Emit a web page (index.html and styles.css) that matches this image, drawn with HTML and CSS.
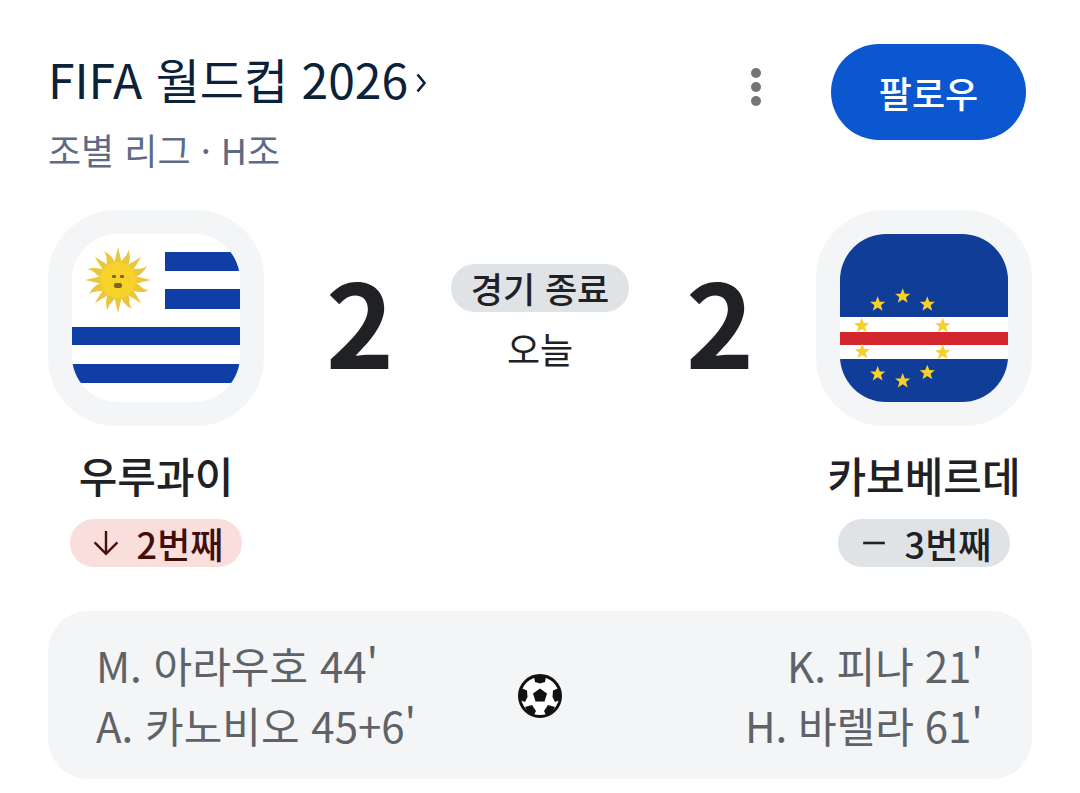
FILE: index.html
```html
<!DOCTYPE html>
<html lang="ko">
<head>
    <meta charset="UTF-8">
    <meta name="viewport" content="width=device-width, initial-scale=1.0">
    <title>FIFA 월드컵 2026</title>
    <link rel="stylesheet" href="styles.css">
</head>
<body>
    <div class="header">
        <div class="league">
            <h2 class="league-title">FIFA 월드컵 2026<svg class="chevron" viewBox="0 0 10 20"><path d="M1.5 1.5l7 8.5-7 8.5" fill="none" stroke="#0b2239" stroke-width="2.6"/></svg></h2>
            <p class="league-round">조별 리그 · H조</p>
        </div>
        <div class="header-actions">
            <svg class="more" viewBox="0 0 10 38"><circle cx="5" cy="5" r="5"/><circle cx="5" cy="19" r="5"/><circle cx="5" cy="33" r="5"/></svg>
            <button class="follow">팔로우</button>
        </div>
    </div>

    <div class="match">
        <div class="team">
            <div class="tile">
                <svg class="flag" viewBox="0 0 168 168">
                    <rect width="168" height="168" fill="#fff"/>
                    <g fill="#0f3fa6">
                        <rect x="93" y="18" width="75" height="19"/>
                        <rect x="93" y="55" width="75" height="20"/>
                        <rect y="93" width="168" height="18"/>
                        <rect y="130" width="168" height="19"/>
                    </g>
                    <g fill="#ecc63a" transform="translate(46 46)">
                        <path id="ray" d="M-4 -16L0 -33L4 -16Z"/>
                        <use href="#ray" transform="rotate(45)"/>
                        <use href="#ray" transform="rotate(90)"/>
                        <use href="#ray" transform="rotate(135)"/>
                        <use href="#ray" transform="rotate(180)"/>
                        <use href="#ray" transform="rotate(225)"/>
                        <use href="#ray" transform="rotate(270)"/>
                        <use href="#ray" transform="rotate(315)"/>
                        <g transform="rotate(22.5)">
                            <path id="wavy" d="M-4 -15C-5 -22 0 -25 -2 -32C3 -27 4 -21 4 -15Z"/>
                            <use href="#wavy" transform="rotate(45)"/>
                            <use href="#wavy" transform="rotate(90)"/>
                            <use href="#wavy" transform="rotate(135)"/>
                            <use href="#wavy" transform="rotate(180)"/>
                            <use href="#wavy" transform="rotate(225)"/>
                            <use href="#wavy" transform="rotate(270)"/>
                            <use href="#wavy" transform="rotate(315)"/>
                        </g>
                        <circle r="18" fill="#f6d22a"/>
                        <g fill="#7d6420">
                            <rect x="-6" y="-5" width="4" height="3" rx="1"/>
                            <rect x="2" y="-5" width="4" height="3" rx="1"/>
                            <rect x="-4" y="3" width="8" height="5" rx="2"/>
                        </g>
                    </g>
                </svg>
            </div>
            <div class="team-name">우루과이</div>
            <div class="rank rank-down">
                <svg class="rank-icon" viewBox="0 0 24 24"><path d="M12 1v21M1.5 11.5L12 22l10.5-10.5" fill="none" stroke="#410e0b" stroke-width="2.2"/></svg>
                <span>2번째</span>
            </div>
        </div>

        <div class="scoreboard">
            <div class="score">2</div>
            <div class="status">
                <div class="status-pill">경기 종료</div>
                <div class="status-date">오늘</div>
            </div>
            <div class="score">2</div>
        </div>

        <div class="team">
            <div class="tile">
                <svg class="flag" viewBox="0 0 168 168">
                    <defs>
                        <polygon id="star" points="0,-8 2.1,-2.6 7.6,-2.5 3.3,1 4.9,6.5 0,3.3 -4.9,6.5 -3.3,1 -7.6,-2.5 -2.1,-2.6"/>
                    </defs>
                    <rect width="168" height="168" fill="#0f3d97"/>
                    <rect y="83" width="168" height="42" fill="#fff"/>
                    <rect y="98" width="168" height="13" fill="#d4262f"/>
                    <g fill="#f7d02c">
                        <use href="#star" x="37.7" y="70.3"/>
                        <use href="#star" x="62.7" y="62.3"/>
                        <use href="#star" x="87.3" y="70.3"/>
                        <use href="#star" x="21.7" y="91.7"/>
                        <use href="#star" x="102.7" y="91.7"/>
                        <use href="#star" x="22.3" y="117.7"/>
                        <use href="#star" x="102.7" y="118.7"/>
                        <use href="#star" x="37.7" y="140"/>
                        <use href="#star" x="62.7" y="147"/>
                        <use href="#star" x="87.3" y="138.7"/>
                    </g>
                </svg>
            </div>
            <div class="team-name">카보베르데</div>
            <div class="rank rank-same">
                <svg class="rank-icon" viewBox="0 0 24 24"><path d="M2 12h20" fill="none" stroke="#202124" stroke-width="2.4"/></svg>
                <span>3번째</span>
            </div>
        </div>
    </div>

    <div class="goals">
        <div class="scorers">
            <div>M. 아라우호 44'</div>
            <div>A. 카노비오 45+6'</div>
        </div>
        <svg class="ball" viewBox="0 0 44 44">
            <circle cx="22" cy="22" r="20.5" fill="#fff" stroke="#111" stroke-width="3"/>
            <g fill="#111">
                <polygon points="22,14.5 29,19.5 26.5,27.5 17.5,27.5 15,19.5"/>
                <polygon points="16,2.5 28,2.5 27,8 22,9.5 17,8"/>
                <polygon points="41,14 42,26 37,28 34.5,23 35,16.5"/>
                <polygon points="3,14 2,26 7,28 9.5,23 9,16.5"/>
                <polygon points="7,33 14,31 18,37 16,41 10,38"/>
                <polygon points="37,33 30,31 26,37 28,41 34,38"/>
            </g>
        </svg>
        <div class="scorers scorers-away">
            <div>K. 피나 21'</div>
            <div>H. 바렐라 61'</div>
        </div>
    </div>
</body>
</html>
```

FILE: styles.css
```css
body {
    font-family: "Noto Sans CJK KR", "Noto Sans", sans-serif;
    background-color: #fff;
    margin: 0;
    padding: 44px 48px 0 48px;
    color: #202124;
}

.header {
    display: flex;
    justify-content: space-between;
    align-items: flex-start;
    height: 166px;
}

.league {
    padding-top: 4px;
}

.league-title {
    margin: 0;
    font-size: 48px;
    line-height: 60px;
    font-weight: 400;
    color: #0b2239;
    display: flex;
    align-items: center;
}

.chevron {
    width: 10px;
    height: 20px;
    margin-left: 8px;
    margin-top: 9px;
}

.league-round {
    margin: 19px 0 0 0;
    font-size: 36px;
    line-height: 44px;
    color: #5f6b85;
}

.header-actions {
    display: flex;
    align-items: center;
    gap: 70px;
    padding-right: 6px;
}

.more {
    width: 10px;
    height: 38px;
    margin-bottom: 11px;
    fill: #757575;
}

.follow {
    width: 195px;
    height: 96px;
    background-color: #0b57d0;
    color: white;
    border: none;
    border-radius: 48px;
    font-family: inherit;
    font-size: 36px;
    font-weight: 500;
}

.match {
    display: flex;
    justify-content: space-between;
    align-items: flex-start;
}

.team {
    width: 216px;
    display: flex;
    flex-direction: column;
    align-items: center;
}

.tile {
    width: 216px;
    height: 216px;
    box-sizing: border-box;
    padding: 24px;
    background: #f3f5f7;
    border-radius: 68px;
}

.flag {
    display: block;
    width: 168px;
    height: 168px;
    border-radius: 46px;
}

.team-name {
    margin-top: 20px;
    font-size: 42px;
    line-height: 58px;
    font-weight: 500;
    white-space: nowrap;
}

.rank {
    margin-top: 15px;
    width: 172px;
    height: 48px;
    box-sizing: border-box;
    padding-left: 4px;
    border-radius: 24px;
    display: flex;
    align-items: center;
    justify-content: center;
    gap: 18px;
    font-size: 36px;
    font-weight: 500;
    line-height: 48px;
}

.rank-down {
    background: #f9dedc;
    color: #410e0b;
}

.rank-same {
    background: #dfe3e6;
    color: #202124;
}

.rank-icon {
    width: 26px;
    height: 26px;
}

.scoreboard {
    flex: 1;
    height: 216px;
    display: flex;
    justify-content: center;
    align-items: center;
    gap: 55px;
}

.score {
    width: 72px;
    text-align: center;
    font-size: 116px;
    line-height: 150px;
    font-weight: 700;
}

.status {
    width: 178px;
    padding-top: 1px;
    display: flex;
    flex-direction: column;
    align-items: center;
}

.status-pill {
    width: 178px;
    height: 48px;
    border-radius: 24px;
    background: #dfe3e6;
    text-align: center;
    font-size: 35px;
    line-height: 48px;
    font-weight: 500;
}

.status-date {
    margin-top: 11px;
    font-size: 36px;
    line-height: 50px;
}

.goals {
    margin-top: 44px;
    height: 168px;
    box-sizing: border-box;
    padding: 0 49px 0 48px;
    background: #f3f5f7;
    border-radius: 40px;
    display: flex;
    justify-content: space-between;
    align-items: center;
}

.scorers {
    font-size: 42px;
    line-height: 60px;
    color: #5f6368;
    width: 380px;
    white-space: nowrap;
}

.scorers-away {
    text-align: right;
    word-spacing: -1px;
}

.ball {
    width: 44px;
    height: 44px;
    margin-top: 2px;
}
```
